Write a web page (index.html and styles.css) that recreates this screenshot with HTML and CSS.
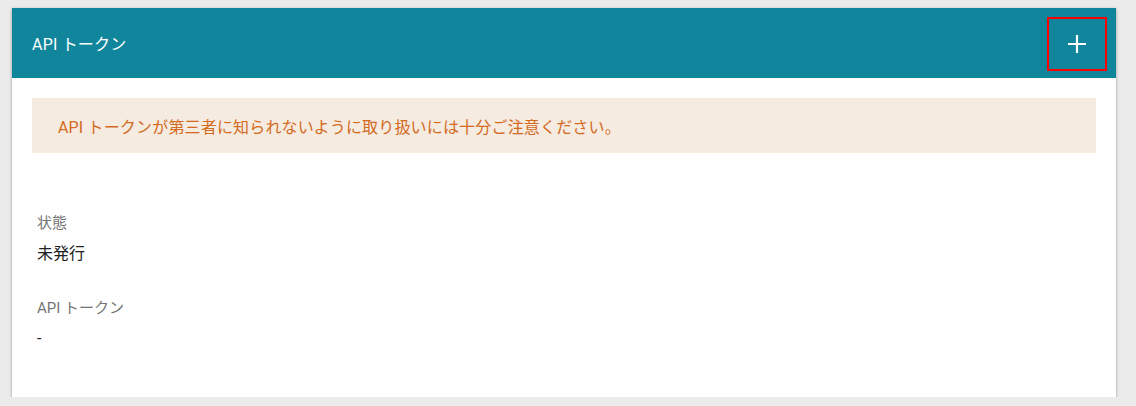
FILE: index.html
```html
<!DOCTYPE html>
<html lang="ja">
<head>
    <meta charset="UTF-8">
    <meta name="viewport" content="width=device-width, initial-scale=1.0">
    <title>API トークン</title>
    <link rel="stylesheet" href="styles.css">
</head>
<body>
    <section class="card">
        <header class="card-header">
            <h1 class="card-title">API トークン</h1>
            <button class="add-btn" type="button" aria-label="追加">
                <svg width="20" height="20" viewBox="0 0 20 20">
                    <path d="M10 1v18M1 10h18" stroke="#fff" stroke-width="2.2" fill="none"/>
                </svg>
            </button>
        </header>

        <div class="card-body">
            <p class="alert">API トークンが第三者に知られないように取り扱いには十分ご注意ください。</p>

            <dl class="fields">
                <div class="field">
                    <dt>状態</dt>
                    <dd>未発行</dd>
                </div>
                <div class="field">
                    <dt>API トークン</dt>
                    <dd>-</dd>
                </div>
            </dl>
        </div>
    </section>
</body>
</html>
```

FILE: styles.css
```css
body {
    margin: 0;
    padding: 8px 20px 0 12px;
    background: #ebebeb;
    font-family: Roboto, "Noto Sans CJK JP", sans-serif;
}
.card {
    width: 1104px;
    background: #fff;
    box-shadow: 0 1px 3px rgba(0, 0, 0, 0.35);
}
.card-header {
    height: 70px;
    background: #10859b;
    display: flex;
    align-items: center;
    justify-content: space-between;
    padding: 0 9px 0 20px;
}
.card-title {
    margin: 0;
    color: #fff;
    font-size: 16px;
    font-weight: 400;
    letter-spacing: 0.2px;
}
.add-btn {
    width: 60px;
    height: 54px;
    margin-top: 1px;
    border: 2px solid #f00;
    background: transparent;
    display: flex;
    align-items: center;
    justify-content: center;
    padding: 0;
}
.card-body {
    padding: 20px 20px 46px;
}
.alert {
    margin: 0;
    height: 55px;
    display: flex;
    align-items: center;
    padding: 0 26px;
    background: #f5ebe0;
    color: #d36a1e;
    font-size: 16px;
    letter-spacing: 0.17px;
}
.fields {
    margin: 60px 0 0;
    padding: 0 5px;
}
.field {
    margin-bottom: 32px;
}
.field:last-child {
    margin-bottom: 0;
}
.field dt {
    color: #757575;
    font-size: 15px;
    line-height: 20px;
    margin-bottom: 9px;
}
.field dd {
    margin: 0;
    color: #212121;
    font-size: 16px;
    line-height: 24px;
}
```
